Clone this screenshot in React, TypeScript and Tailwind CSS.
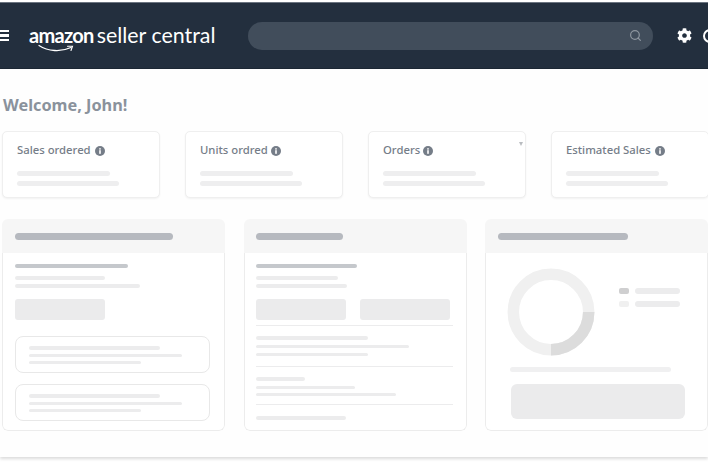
import { Search } from "lucide-react";
import { FaCog } from "react-icons/fa";

const metrics = [
  { label: "Sales ordered", gap: "ml-[4px]" },
  { label: "Units ordred", gap: "ml-[3px]" },
  { label: "Orders", gap: "ml-[3px]", caret: true },
  { label: "Estimated Sales", gap: "ml-[4px]" },
];

function InfoIcon() {
  return (
    <svg width="10" height="10" viewBox="0 0 10 10" className="shrink-0">
      <circle cx="5" cy="5" r="5" fill="#757d88" />
      <rect x="4.2" y="4.2" width="1.6" height="3.6" fill="#fff" />
      <rect x="4.2" y="2.2" width="1.6" height="1.4" fill="#fff" />
    </svg>
  );
}

function Logo() {
  return (
    <div className="relative ml-[20px] flex h-[30px] w-[187px] shrink-0 items-baseline whitespace-nowrap pt-[4px] font-['Lato',sans-serif] leading-none text-white">
      <span className="text-[20px] font-bold tracking-[-0.7px]">amazon</span>
      <span className="ml-[3px] text-[21.4px] font-normal">seller central</span>
      {/* smile under the wordmark */}
      <svg width="38" height="9" viewBox="0 0 38 9" className="absolute left-[9px] top-[23px]" fill="none">
        <path d="M1 1.5C10 7.5 23 8.2 33 3.5" stroke="#fff" strokeWidth="1.3" strokeLinecap="round" />
        <path d="M29.5 2.2L34.5 2.2L33 6.5" stroke="#fff" strokeWidth="1.1" strokeLinecap="round" />
      </svg>
    </div>
  );
}

function Header() {
  return (
    <header className="flex h-[66px] items-center overflow-hidden border-b border-[#1c2734] bg-[#232f3e] shadow-[0_-1px_0_#6b7480]">
      <div className="flex w-[9px] shrink-0 flex-col gap-[2px]">
        <span className="h-[2.5px] bg-white" />
        <span className="h-[2.5px] bg-white" />
        <span className="h-[2.5px] bg-white" />
      </div>
      <Logo />
      <div className="ml-[32px] flex h-[28px] w-[405px] shrink-0 items-center justify-end rounded-full bg-[#414d5b] pr-[11px]">
        <Search size={13} strokeWidth={2.2} className="text-[#8f97a0]" />
      </div>
      <FaCog size={15} className="ml-[24px] shrink-0 text-white" />
      <span className="ml-[11px] h-[14px] w-[14px] shrink-0 rounded-full border-2 border-white" />
    </header>
  );
}

function MetricCard({ label, gap, caret }: { label: string; gap: string; caret?: boolean }) {
  return (
    <div className="relative h-[67px] w-[158px] shrink-0 rounded-[5px] border border-[#efefef] bg-white pl-[14px] pt-[11px] shadow-[0_1px_2px_rgba(0,0,0,0.05)]">
      <div className="flex h-[15px] items-center font-['Noto_Sans',sans-serif] text-[11.3px] font-medium text-[#757d88]">
        {label}
        <span className={gap}>
          <InfoIcon />
        </span>
      </div>
      <div className="mt-[13px] h-[5px] w-[93px] rounded-full bg-[#eeeeef]" />
      <div className="mt-[5px] h-[5px] w-[102px] rounded-full bg-[#eeeeef]" />
      {caret && (
        <span className="absolute right-[2px] top-[10px] h-0 w-0 border-x-[2.5px] border-t-[4px] border-x-transparent border-t-[#b9bcc0]" />
      )}
    </div>
  );
}

function Panel({
  barWidth,
  headInset = "pl-[13px]",
  bodyInset = "pl-[12px]",
  children,
}: {
  barWidth: string;
  headInset?: string;
  bodyInset?: string;
  children: React.ReactNode;
}) {
  return (
    <section className="flex h-[212px] w-[223px] shrink-0 flex-col overflow-hidden rounded-[6px] bg-white">
      <div className={`flex h-[34px] shrink-0 items-center bg-[#f6f6f6] ${headInset}`}>
        <div className={`h-[7px] rounded-full bg-[#b6b9bf] ${barWidth}`} />
      </div>
      <div className={`flex-1 rounded-b-[6px] border-x border-b border-[#ececec] ${bodyInset}`}>{children}</div>
    </section>
  );
}

function SubCard() {
  return (
    <div className="flex h-[37px] w-[195px] flex-col justify-center gap-[4px] rounded-[8px] border border-[#e8e8e8] pl-[13px]">
      <div className="h-[4px] w-[131px] rounded-full bg-[#ececed]" />
      <div className="h-[3px] w-[153px] rounded-full bg-[#ececed]" />
      <div className="h-[3px] w-[112px] rounded-full bg-[#ececed]" />
    </div>
  );
}

function OverviewPanel() {
  return (
    <Panel barWidth="w-[158px]">
      <div className="mt-[11px] h-[4px] w-[113px] rounded-full bg-[#c5c8cc]" />
      <div className="mt-[8px] h-[4px] w-[90px] rounded-full bg-[#ececed]" />
      <div className="mt-[4px] h-[4px] w-[125px] rounded-full bg-[#ececed]" />
      <div className="mt-[11px] h-[21px] w-[90px] rounded-[3px] bg-[#ebebec]" />
      <div className="mt-[16px] flex flex-col gap-[11px]">
        <SubCard />
        <SubCard />
      </div>
    </Panel>
  );
}

function DetailPanel() {
  return (
    <Panel barWidth="w-[87px]" headInset="pl-[12px]" bodyInset="pl-[11px]">
      <div className="mt-[11px] h-[4px] w-[101px] rounded-full bg-[#c5c8cc]" />
      <div className="mt-[8px] h-[4px] w-[82px] rounded-full bg-[#ececed]" />
      <div className="mt-[4px] h-[4px] w-[91px] rounded-full bg-[#ececed]" />
      <div className="mt-[11px] flex gap-[14px]">
        <div className="h-[21px] w-[90px] rounded-[3px] bg-[#ebebec]" />
        <div className="h-[21px] w-[90px] rounded-[3px] bg-[#ebebec]" />
      </div>
      <div className="mt-[5px] h-px w-[197px] bg-[#ececed]" />
      <div className="mt-[10px] h-[4px] w-[112px] rounded-full bg-[#ececed]" />
      <div className="mt-[5px] h-[3px] w-[153px] rounded-full bg-[#ececed]" />
      <div className="mt-[5px] h-[3px] w-[112px] rounded-full bg-[#ececed]" />
      <div className="mt-[10px] h-px w-[197px] bg-[#ececed]" />
      <div className="mt-[10px] h-[4px] w-[49px] rounded-full bg-[#ececed]" />
      <div className="mt-[5px] h-[3px] w-[99px] rounded-full bg-[#ececed]" />
      <div className="mt-[4px] h-[3px] w-[140px] rounded-full bg-[#ececed]" />
      <div className="mt-[8px] h-px w-[197px] bg-[#ececed]" />
      <div className="mt-[11px] h-[4px] w-[90px] rounded-full bg-[#ececed]" />
    </Panel>
  );
}

function Donut() {
  return (
    <svg width="88" height="88" viewBox="0 0 88 88" className="shrink-0" fill="none">
      <circle cx="44" cy="44" r="37.7" stroke="#f0f0f0" strokeWidth="11.5" />
      <path d="M81.7 44A37.7 37.7 0 0 1 44 81.7" stroke="#dcdcdc" strokeWidth="11.5" />
    </svg>
  );
}

function ChartPanel() {
  return (
    <Panel barWidth="w-[130px]">
      <div className="mt-[15px] flex pl-[9px]">
        <Donut />
        <div className="ml-[24px] mt-[20px] flex flex-col gap-[7px]">
          <div className="flex items-center gap-[6px]">
            <span className="h-[6px] w-[10px] rounded-[2px] bg-[#cfcfd0]" />
            <span className="h-[6px] w-[45px] rounded-full bg-[#ececed]" />
          </div>
          <div className="flex items-center gap-[6px]">
            <span className="h-[6px] w-[10px] rounded-[2px] bg-[#f0f0f0]" />
            <span className="h-[6px] w-[45px] rounded-full bg-[#ececed]" />
          </div>
        </div>
      </div>
      <div className="ml-[12px] mt-[11px] h-[5px] w-[161px] rounded-full bg-[#f0f0f1]" />
      <div className="ml-[13px] mt-[12px] h-[35px] w-[174px] rounded-[6px] bg-[#ebebec]" />
    </Panel>
  );
}

export default function App() {
  return (
    <div className="h-[465px] w-[708px] overflow-hidden bg-white pt-[3px]">
      <div className="h-[454px] bg-[#fefefe] shadow-[0_2px_3px_rgba(0,0,0,0.14)]">
        <Header />
        <main className="pl-[2px]">
          <h1 className="ml-px mt-[25px] h-[23px] font-['Noto_Sans',sans-serif] text-[16.3px] font-bold leading-[23px] text-[#8a929c]">
            Welcome, John!
          </h1>
          <div className="mt-[14px] flex gap-[25px]">
            {metrics.map((m) => (
              <MetricCard key={m.label} {...m} />
            ))}
          </div>
          <div className="mt-[21px] flex">
            <OverviewPanel />
            <div className="ml-[19px]">
              <DetailPanel />
            </div>
            <div className="ml-[18px]">
              <ChartPanel />
            </div>
          </div>
        </main>
      </div>
    </div>
  );
}
